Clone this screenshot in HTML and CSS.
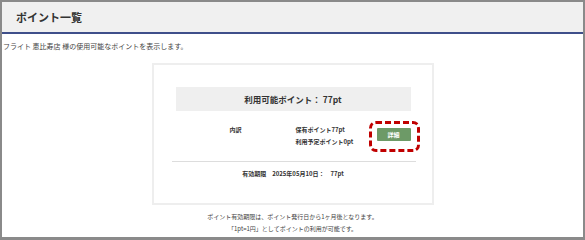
FILE: index.html
```html
<!DOCTYPE html>
<html lang="ja">

<head>
    <meta charset="UTF-8">
    <meta name="viewport" content="width=device-width, initial-scale=1.0">
    <title>ポイント一覧</title>
    <link rel="stylesheet" href="styles.css">
</head>

<body>
    <div class="frame">
        <div class="page-head">
            <h1>ポイント一覧</h1>
        </div>

        <p class="intro">フライト 恵比寿店 様の使用可能なポイントを表示します。</p>

        <div class="card">
            <div class="total">利用可能ポイント： 77pt</div>

            <div class="breakdown">
                <span class="label">内訳</span>
                <div class="points">
                    <div>保有ポイント77pt</div>
                    <div>利用予定ポイント0pt</div>
                </div>
                <div class="detail-wrap">
                    <button class="detail">詳細</button>
                    <span class="mark"></span>
                </div>
            </div>

            <hr class="divider">

            <p class="expiry">有効期限　2025年05月10日：　77pt</p>
        </div>

        <div class="notes">
            <p>ポイント有効期限は、ポイント発行日から1ヶ月後となります。</p>
            <p>「1pt=1円」としてポイントの利用が可能です。</p>
        </div>
    </div>
</body>

</html>
```

FILE: styles.css
```css
body {
    margin: 0;
    font-family: "Noto Sans CJK JP", "Noto Sans", sans-serif;
    color: #333;
}

.frame {
    box-sizing: border-box;
    height: 240px;
    border: 2px solid #8a8a8a;
    border-bottom-width: 3px;
    background-color: #fff;
}

.page-head {
    height: 30px;
    background-color: #f0f0f0;
    border-bottom: 2px solid #3f4f8a;
}

.page-head h1 {
    margin: 0;
    padding-left: 14px;
    font-size: 11px;
    line-height: 31px;
    font-weight: bold;
    color: #333;
}

.intro {
    margin: 7px 0 0;
    padding-left: 1px;
    font-size: 7px;
    line-height: 10px;
    color: #444;
}

.card {
    box-sizing: border-box;
    width: 282px;
    margin: 12px auto 0;
    padding: 22px 21px 23px 22px;
    border: 2px solid #eeeeee;
}

.total {
    height: 24px;
    line-height: 24px;
    background-color: #efefef;
    text-align: center;
    font-size: 8.5px;
    font-weight: bold;
}

.breakdown {
    display: flex;
    margin-top: 13px;
    padding-left: 54px;
    font-size: 6px;
    line-height: 12px;
    font-weight: bold;
    color: #333;
}

.label {
    width: 66px;
}

.points {
    flex: 1;
    color: #333;
}

.detail-wrap {
    position: relative;
    margin-top: 4px;
    height: 13px;
}

.detail {
    display: block;
    width: 34px;
    height: 13px;
    padding: 0;
    border: none;
    border-radius: 1px;
    background-color: #6d9a67;
    color: #fff;
    font-family: inherit;
    font-size: 6px;
    font-weight: bold;
}

.mark {
    position: absolute;
    left: -8px;
    right: -9px;
    top: -7px;
    bottom: -11px;
    border: 3px dashed #c00000;
    border-radius: 7px;
}

.divider {
    margin: 13px -5px 0 -4px;
    border: none;
    border-top: 1px solid #dddddd;
}

.expiry {
    margin: 6px 0 0;
    text-align: center;
    font-size: 6px;
    line-height: 12px;
    font-weight: bold;
}

.notes {
    margin-top: 6px;
    text-align: center;
    font-size: 6px;
    line-height: 12px;
    color: #444;
}

.notes p {
    margin: 0;
}
```
